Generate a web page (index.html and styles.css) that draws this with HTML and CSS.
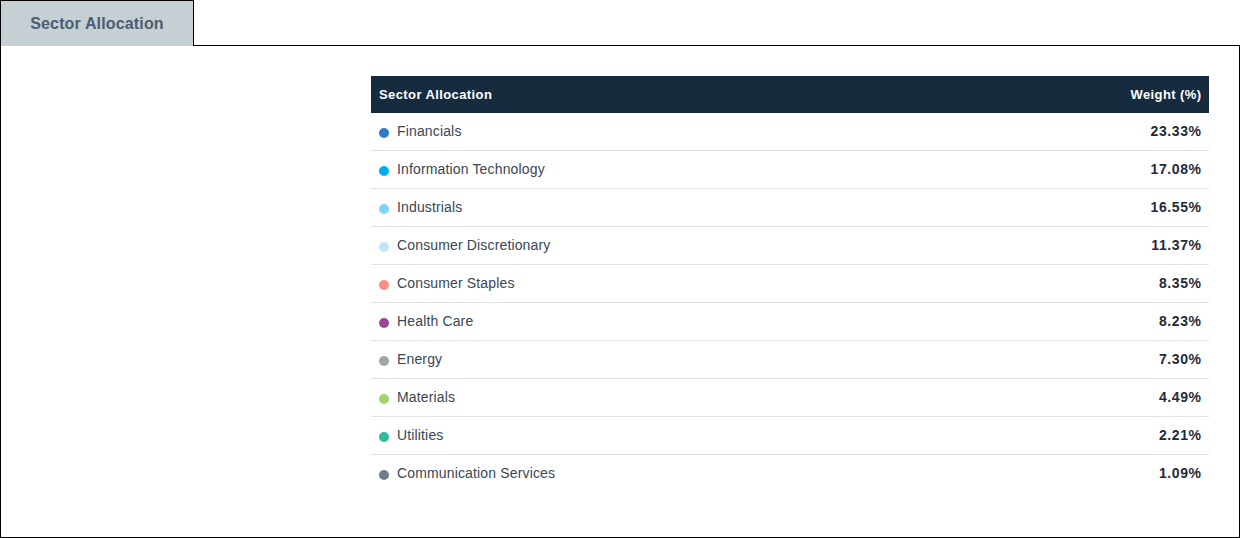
FILE: index.html
```html
<!DOCTYPE html>
<html>
<head>
<meta charset="utf-8">
<link rel="stylesheet" href="styles.css">
</head>
<body>
<div class="tabs">
  <div class="tab">Sector Allocation</div>
  <div class="tab-fill"></div>
</div>
<div class="panel">
  <div class="chart-area"></div>
  <table class="alloc">
    <thead>
      <tr><th class="name">Sector Allocation</th><th class="val">Weight (%)</th></tr>
    </thead>
    <tbody>
      <tr><td class="name"><span class="dot c1"></span>Financials</td><td class="val">23.33%</td></tr>
      <tr><td class="name"><span class="dot c2"></span>Information Technology</td><td class="val">17.08%</td></tr>
      <tr><td class="name"><span class="dot c3"></span>Industrials</td><td class="val">16.55%</td></tr>
      <tr><td class="name"><span class="dot c4"></span>Consumer Discretionary</td><td class="val">11.37%</td></tr>
      <tr><td class="name"><span class="dot c5"></span>Consumer Staples</td><td class="val">8.35%</td></tr>
      <tr><td class="name"><span class="dot c6"></span>Health Care</td><td class="val">8.23%</td></tr>
      <tr><td class="name"><span class="dot c7"></span>Energy</td><td class="val">7.30%</td></tr>
      <tr><td class="name"><span class="dot c8"></span>Materials</td><td class="val">4.49%</td></tr>
      <tr><td class="name"><span class="dot c9"></span>Utilities</td><td class="val">2.21%</td></tr>
      <tr><td class="name"><span class="dot c10"></span>Communication Services</td><td class="val">1.09%</td></tr>
    </tbody>
  </table>
</div>
</body>
</html>
```
FILE: styles.css
```css
html, body {
  margin: 0;
  padding: 0;
  background: #ffffff;
  font-family: "Liberation Sans", Arial, sans-serif;
}
.tabs {
  display: flex;
  height: 46px;
}
.tab {
  box-sizing: border-box;
  width: 194px;
  height: 46px;
  border: 1px solid #000;
  border-bottom: none;
  background: #c6cfd3;
  color: #4a5e72;
  font-weight: bold;
  font-size: 16px;
  letter-spacing: 0.15px;
  display: flex;
  align-items: center;
  justify-content: center;
}
.tab-fill {
  flex: 1;
  box-sizing: border-box;
  border-bottom: 1px solid #000;
}
.panel {
  box-sizing: border-box;
  height: 492px;
  border: 1px solid #000;
  border-top: none;
  display: grid;
  grid-template-columns: 370px 1fr;
  padding: 30px 30px 0 0;
  align-items: start;
}
.alloc {
  width: 100%;
  border-collapse: collapse;
  font-size: 14px;
}
.alloc th {
  background: #172b3f;
  color: #ffffff;
  font-weight: bold;
  font-size: 13px;
  letter-spacing: 0.4px;
  height: 37px;
  padding: 0 8px;
}
.alloc th.name { text-align: left; }
.alloc th.val { text-align: right; padding-right: 7.6px; }
.alloc td {
  height: 36px;
  padding: 0 8px 1px;
  border-bottom: 1px solid #e1e1e1;
}
.alloc tbody tr:last-child td { border-bottom: none; }
.alloc td.name {
  color: #3a4654;
  letter-spacing: 0.15px;
}
.alloc td.val {
  text-align: right;
  font-weight: bold;
  letter-spacing: 0.6px;
  padding-right: 7.4px;
  color: #1f2b3a;
}
.dot {
  display: inline-block;
  width: 10px;
  height: 10px;
  border-radius: 50%;
  margin-right: 8px;
  vertical-align: -2px;
}
.c1 { background: #2e7bc4; }
.c2 { background: #00aeef; }
.c3 { background: #7fd3f7; }
.c4 { background: #bfe6f2; }
.c5 { background: #f78f87; }
.c6 { background: #9b4699; }
.c7 { background: #a3a3a3; }
.c8 { background: #a3d36b; }
.c9 { background: #2dbb9b; }
.c10 { background: #6f7c89; }
```
